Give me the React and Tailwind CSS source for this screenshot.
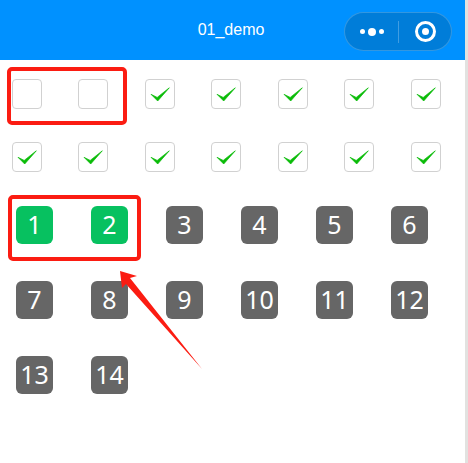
const checks = [false, false, true, true, true, true, true, true, true, true, true, true, true, true];
const numbers = [1, 2, 3, 4, 5, 6, 7, 8, 9, 10, 11, 12, 13, 14];

const Checkbox = ({ checked }) => (
  <div className="relative ml-3 mb-[33px] h-[30px] w-[30px] rounded-[4px] border border-[#d1d1d1] bg-white">
    {checked && (
      <svg className="absolute -top-px -left-px" width="30" height="30" viewBox="0 0 30 30">
        <path d="M6 15.3 L12.2 18.4 L24.3 8.8 L12.7 22 Z" fill="#09bb07" stroke="#09bb07" strokeWidth="0.7" strokeLinejoin="round" />
      </svg>
    )}
  </div>
);

export default function App() {
  return (
    <div className="relative flex h-[463px] w-[468px] bg-white font-['Noto_Sans','Open_Sans',sans-serif]">
      <div className="w-[465px]">
        {/* Nav bar */}
        <div className="flex h-[60px] items-center justify-center bg-[#0091ff] pr-[3px]">
          <span className="font-['Liberation_Sans',sans-serif] text-[16px] text-white">01_demo</span>
        </div>

        {/* Checkbox group */}
        <div className="grid grid-cols-7 pt-[19px]">
          {checks.map((checked, i) => (
            <Checkbox key={i} checked={checked} />
          ))}
        </div>

        {/* Number grid */}
        <div className="grid grid-cols-[repeat(6,75px)] gap-y-[37px] pl-4 pt-px">
          {numbers.map((n) => (
            <div
              key={n}
              className={`flex h-[38px] w-[37px] items-center justify-center rounded-md text-[25px] text-white ${n < 3 ? "bg-[#07c160]" : "bg-[#666666]"}`}
            >
              {n}
            </div>
          ))}
        </div>
      </div>
      <div className="w-[3px] bg-[#e2e2e0]" />

      {/* Capsule menu */}
      <div className="absolute top-3 left-[344px] flex h-[39px] w-[108px] items-center rounded-full border border-white/20 bg-[#007dd9]">
        <div className="flex w-[53px] items-center justify-center gap-[3px]">
          <span className="h-[5px] w-[5px] rounded-full bg-white" />
          <span className="h-2 w-2 rounded-full bg-white" />
          <span className="h-[5px] w-[5px] rounded-full bg-white" />
        </div>
        <div className="h-[22px] w-px bg-white/25" />
        <div className="flex flex-1 items-center justify-center">
          <div className="flex h-[21px] w-[21px] items-center justify-center rounded-full border-[3px] border-white">
            <div className="h-[7px] w-[7px] rounded-full bg-white" />
          </div>
        </div>
      </div>

      {/* Red annotations */}
      <div className="absolute top-[67px] left-[7px] h-[58px] w-[120px] rounded-[5px] border-4 border-[#fb1c12]" />
      <div className="absolute top-[195px] left-2 h-[66px] w-[133px] rounded-[5px] border-4 border-[#fb1c12]" />
      <svg className="absolute top-0 left-0" width="468" height="463">
        <polygon points="120,271 137,276 130,278 202,369 126,284 122,288" fill="#fb1c12" />
      </svg>
    </div>
  );
}
